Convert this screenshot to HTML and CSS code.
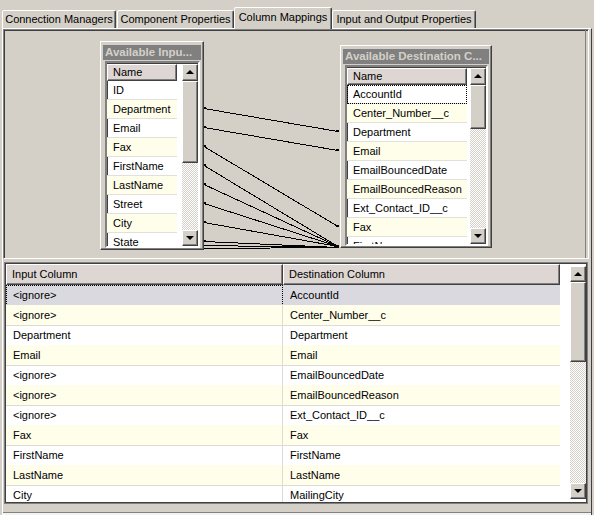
FILE: index.html
```html
<!DOCTYPE html>
<html lang="en">
<head>
  <meta charset="UTF-8" />
  <title>Column Mappings</title>
  <link rel="stylesheet" href="styles.css">
</head>
<body>
  <div class="tabs">
    <div class="tab t1">Connection Managers</div>
    <div class="tab t2">Component Properties</div>
    <div class="tab t3 active">Column Mappings</div>
    <div class="tab t4">Input and Output Properties</div>
  </div>

  <div class="page">
    <!-- mapping diagram -->
    <div class="diagram">
      <div class="canvas">
        <svg class="links" width="582" height="228" viewBox="4 30 582 228" shape-rendering="crispEdges">
          <g stroke="#000" stroke-width="1" fill="none">
            <line x1="204" y1="108.5" x2="338" y2="131.5"/>
            <line x1="204" y1="127.5" x2="338" y2="150.5"/>
            <line x1="204" y1="146.5" x2="338" y2="226.5"/>
            <line x1="204" y1="165.5" x2="338" y2="246.5"/>
            <line x1="204" y1="184.5" x2="338" y2="246.5"/>
            <line x1="204" y1="203.5" x2="338" y2="246.5"/>
            <line x1="204" y1="222.5" x2="338" y2="246.5"/>
            <line x1="204" y1="241.5" x2="338" y2="247.5"/>
            <line x1="204" y1="245.5" x2="338" y2="247.5"/>
            <line x1="204" y1="248.5" x2="338" y2="247.5"/>
          </g>
          <g fill="#000">
            <rect x="204" y="107" width="2" height="2"/>
            <rect x="204" y="126" width="2" height="2"/>
            <rect x="204" y="145" width="2" height="2"/>
            <rect x="204" y="164" width="2" height="2"/>
            <rect x="204" y="183" width="2" height="2"/>
            <rect x="204" y="202" width="2" height="2"/>
            <rect x="204" y="221" width="2" height="2"/>
            <rect x="204" y="240" width="2" height="2"/>
            <rect x="336" y="130" width="3" height="2"/>
            <rect x="336" y="149" width="3" height="2"/>
            <rect x="336" y="225" width="3" height="2"/>
            <rect x="334" y="245" width="5" height="3"/>
          </g>
        </svg>

        <div class="node node-in">
          <div class="node-title">Available Inpu...</div>
          <div class="list">
            <div class="cells">
              <div class="hdr">Name</div>
              <div class="item">ID</div>
              <div class="item alt">Department</div>
              <div class="item">Email</div>
              <div class="item alt">Fax</div>
              <div class="item">FirstName</div>
              <div class="item alt">LastName</div>
              <div class="item">Street</div>
              <div class="item alt">City</div>
              <div class="item">State</div>
            </div>
            <div class="sbar">
              <div class="sbtn up"></div>
              <div class="thumb thumb-in"></div>
              <div class="track"></div>
              <div class="sbtn down"></div>
            </div>
          </div>
        </div>

        <div class="node node-dest">
          <div class="node-title">Available Destination C...</div>
          <div class="list">
            <div class="cells">
              <div class="hdr">Name</div>
              <div class="item focus">AccountId</div>
              <div class="item alt">Center_Number__c</div>
              <div class="item">Department</div>
              <div class="item alt">Email</div>
              <div class="item">EmailBouncedDate</div>
              <div class="item alt">EmailBouncedReason</div>
              <div class="item">Ext_Contact_ID__c</div>
              <div class="item alt">Fax</div>
              <div class="item">FirstName</div>
            </div>
            <div class="sbar">
              <div class="sbtn up"></div>
              <div class="thumb thumb-dest"></div>
              <div class="track"></div>
              <div class="sbtn down"></div>
            </div>
          </div>
        </div>
      </div>
    </div>

    <div class="split"></div>

    <!-- mapping grid -->
    <div class="grid">
      <div class="grid-in">
        <div class="grid-main">
          <div class="grow ghead"><div>Input Column</div><div>Destination Column</div></div>
          <div class="grow sel"><div>&lt;ignore&gt;</div><div>AccountId</div></div>
          <div class="grow alt"><div>&lt;ignore&gt;</div><div>Center_Number__c</div></div>
          <div class="grow"><div>Department</div><div>Department</div></div>
          <div class="grow alt"><div>Email</div><div>Email</div></div>
          <div class="grow"><div>&lt;ignore&gt;</div><div>EmailBouncedDate</div></div>
          <div class="grow alt"><div>&lt;ignore&gt;</div><div>EmailBouncedReason</div></div>
          <div class="grow"><div>&lt;ignore&gt;</div><div>Ext_Contact_ID__c</div></div>
          <div class="grow alt"><div>Fax</div><div>Fax</div></div>
          <div class="grow"><div>FirstName</div><div>FirstName</div></div>
          <div class="grow alt"><div>LastName</div><div>LastName</div></div>
          <div class="grow"><div>City</div><div>MailingCity</div></div>
        </div>
        <div class="sbar big">
          <div class="sbtn up"></div>
          <div class="thumb thumb-grid"></div>
          <div class="track"></div>
          <div class="sbtn down"></div>
        </div>
      </div>
    </div>

    <div class="foot"></div>
  </div>
</body>
</html>
```

FILE: styles.css
```css
* { box-sizing: border-box; }
body { margin:0; width:594px; height:515px; overflow:hidden; background:#d4d0c8; color:#000;
       font-family:"Liberation Sans", Arial, sans-serif; font-size:11px; }

/* tabs */
.tabs { display:flex; align-items:flex-end; height:28px; padding-left:2px; position:relative; z-index:2; }
.tab { height:18px; line-height:16px; text-align:center; white-space:nowrap; background:#d4d0c8;
       border:1px solid; border-bottom:none; border-color:#fff #404040 transparent #fff;
       border-radius:2px 2px 0 0; box-shadow:inset -1px 0 #808080; }
.tab.active { height:22px; line-height:18px; margin-bottom:-1px; }
.t1 { width:114px; }
.t2 { width:117px; margin-left:1px; }
.t3 { width:98px; }
.t4 { width:144px; }

/* tab page */
.page { margin-left:2px; width:590px; height:487px; border-top:1px solid #fff; border-left:1px solid #fff; border-right:1px solid #404040; }

.diagram { width:586px; height:230px; border:1px solid; border-color:#808080 #fff #fff #808080; box-shadow:inset 1px 1px #404040; }
.canvas { position:relative; width:582px; height:100%; border-right:1px solid #808080; }
.links { position:absolute; left:0; top:0; }

/* table boxes on the diagram */
.node { position:absolute; display:flex; flex-direction:column; background:#d4d0c8; padding:3px 2px 1px 2px;
        border:1px solid; border-color:#fff #404040 #404040 #fff; box-shadow:inset -1px -1px #808080; }
.node-in { left:96px; top:11px; width:104px; height:209px; }
.node-dest { left:336px; top:15px; width:152px; height:203px; }
.node-title { height:15px; line-height:15px; margin-bottom:1px; padding-left:2px; background:#808080; color:#d4d0c8;
              font-weight:bold; font-size:11.5px; white-space:nowrap; overflow:hidden; }
.list { flex:1; display:flex; margin:0 1px 0 2px; background:#fff; min-height:0;
        border:2px solid; border-color:#808080 #fff #fff #808080; box-shadow:inset 1px 1px #404040; }
.cells { overflow:hidden; padding-top:1px; }
.node-in .cells { width:70px; margin-right:5px; }
.node-dest .cells { width:120px; margin-right:3px; }
.hdr { height:17px; line-height:15px; padding-left:5px; background:#ddd6d3;
       border:1px solid; border-color:#fff #404040 #404040 #fff; box-shadow:inset -1px -1px #808080; }
.item { height:19px; line-height:18px; padding-left:6px; white-space:nowrap; border-bottom:1px solid #e2e0da; }
.item.alt { background:#fffeea; }
.item.focus { outline:1px dotted #000; outline-offset:-1px; }

/* scrollbars */
.sbar { width:16px; display:flex; flex-direction:column; padding-top:1px; }
.sbtn { height:17px; flex:none; display:flex; align-items:center; justify-content:center; background:#d4d0c8;
        border:1px solid; border-color:#fff #404040 #404040 #fff; box-shadow:inset -1px -1px #808080; }
.sbtn.down { height:16px; }
.sbtn::after { content:""; border-left:4px solid transparent; border-right:4px solid transparent; }
.sbtn.up::after { border-bottom:4px solid #000; margin-top:-1px; }
.sbtn.down::after { border-top:4px solid #000; }
.thumb { flex:none; background:#d4d0c8; border:1px solid; border-color:#fff #404040 #404040 #fff; box-shadow:inset -1px -1px #808080; }
.thumb-in { height:82px; }
.thumb-dest { height:44px; }
.thumb-grid { height:80px; }
.track { flex:1; background:repeating-conic-gradient(#fff 0 25%, #d4d0c8 0 50%) 0 0/2px 2px; }

.split { height:3px; }

/* lower mapping grid */
.grid { margin-left:1px; width:584px; height:242px; border:1px solid #808080; }
.grid-in { display:flex; height:100%; border:1px solid #404040; background:#fff; }
.grid-main { width:564px; overflow:hidden; }
.grow { display:grid; grid-template-columns:277px 277px; height:20px; }
.grow > div { padding-left:7px; line-height:20px; white-space:nowrap; border-bottom:1px solid #dedbd3; }
.grow > div:first-child { border-right:1px solid #dedbd3; }
.grow.alt > div { background:#fffeea; }
.grow.sel > div { background:#d9d9df; }
.grow.sel > div:first-child { outline:1px dotted #000; outline-offset:-1px; }
.ghead { height:21px; }
.ghead > div { padding-left:5px; line-height:19px; background:#ddd6d3; border:1px solid; border-color:#fff #404040 #404040 #fff;
               box-shadow:inset -1px -1px #808080; }
.ghead > div:first-child { border-right-color:#404040; }
.sbar.big { margin:1px 0 3px; padding-top:1px; }
.sbar.big .sbtn { height:16px; }

.foot { margin-top:8px; height:3px; border-top:1px solid #808080; background:#f4f3f0; }
```
